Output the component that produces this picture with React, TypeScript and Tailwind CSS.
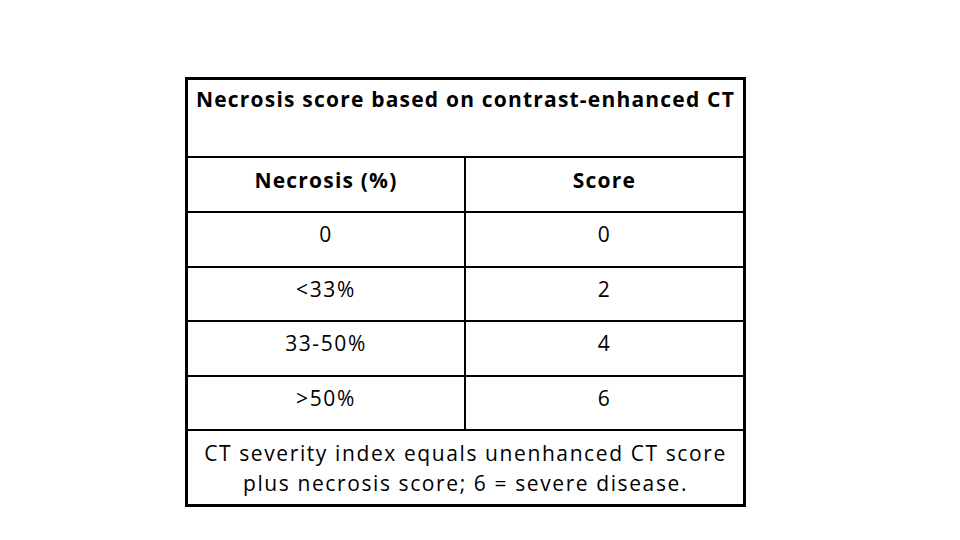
export default function App() {
  const rows = [
    ["0", "0"],
    ["<33%", "2"],
    ["33-50%", "4"],
    [">50%", "6"],
  ];
  const rowHeights = ["h-[53px]", "h-[52px]", "h-[53px]", "h-[52px]"];

  return (
    <div
      className="w-[960px] h-[540px] bg-white text-black"
      style={{ fontFamily: "'Open Sans', Lato, sans-serif" }}
    >
      <div className="pt-[77px] pl-[185px]">
        <div className="w-[561px] h-[430px] border-[3px] border-black flex flex-col">
          {/* Title */}
          <div className="h-[78px] border-b-2 border-black text-center pt-[4px]">
            <span className="text-[21px] font-bold leading-[30px] tracking-[1.2px]">
              Necrosis score based on contrast-enhanced CT
            </span>
          </div>

          {/* Header */}
          <div className="h-[55px] border-b-2 border-black flex text-[21px] font-bold tracking-[1.2px]">
            <div className="w-[278px] border-r-2 border-black text-center pt-[7px]">
              Necrosis (%)
            </div>
            <div className="flex-1 text-center pt-[7px]">Score</div>
          </div>

          {rows.map((r, i) => (
            <div
              key={i}
              className={`flex border-b-2 border-black text-[21px] tracking-[1.6px] ${rowHeights[i]} box-content`}
            >
              <div className="w-[278px] border-r-2 border-black text-center pt-[6px]">
                {r[0]}
              </div>
              <div className="flex-1 text-center pt-[6px]">{r[1]}</div>
            </div>
          ))}

          {/* Footer */}
          <div className="flex-1 text-center text-[21px] leading-[30px] tracking-[1.6px] pt-[7px]">
            CT severity index equals unenhanced CT score
            <br />
            plus necrosis score; 6 = severe disease.
          </div>
        </div>
      </div>
    </div>
  );
}
